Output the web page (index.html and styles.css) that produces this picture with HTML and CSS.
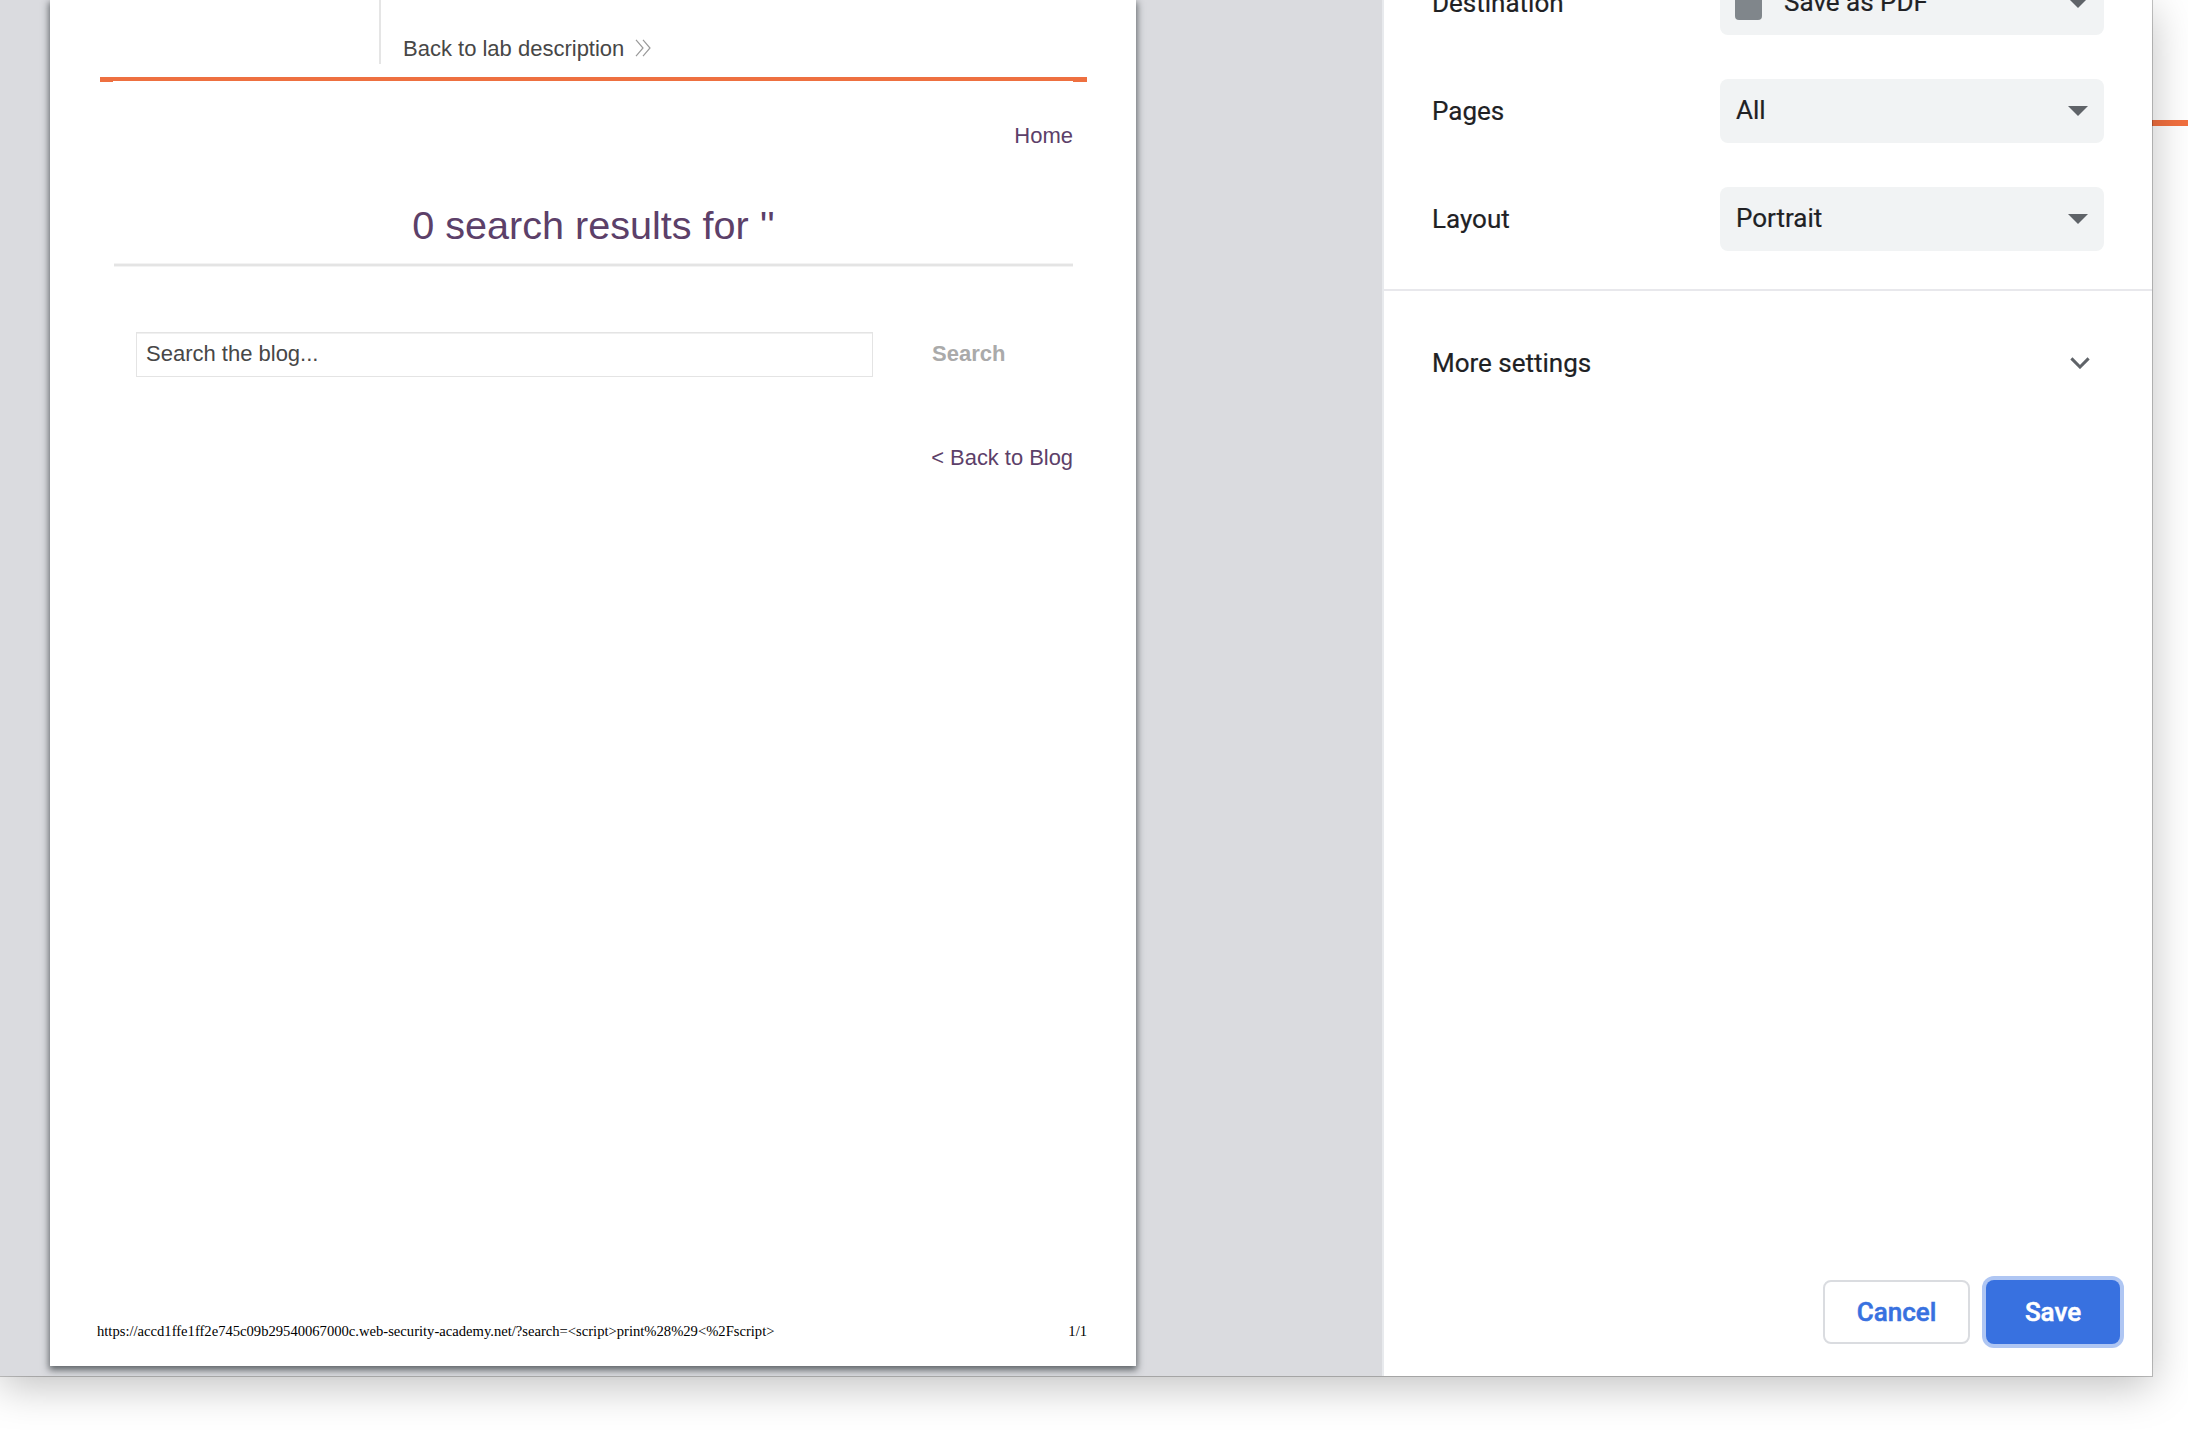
FILE: index.html
```html
<!DOCTYPE html>
<html lang="en">
<head>
<meta charset="utf-8">
<title>Print</title>
<link rel="stylesheet" href="styles.css">
</head>
<body>
<div class="backdrop-rule"></div>
<main class="dialog">
  <section class="preview">
    <article class="sheet">
      <header class="lab-header">
        <div class="lab-link"><span>Back to lab description</span>
          <svg class="lab-arrows" viewBox="0 0 16 18"><path d="M1 .8 8 9 1 17.2M8 .8 15 9 8 17.200" fill="none" stroke="#9a9a9a" stroke-width="1.200"/></svg>
        </div>
      </header>
      <div class="accent"><i></i><b></b><i class="wide"></i></div>
      <div class="content">
        <a class="home">Home</a>
        <h1>0 search results for ''</h1>
        <div class="search">
          <div class="field">Search the blog...</div>
          <span class="search-btn">Search</span>
        </div>
        <a class="back">&lt; Back to Blog</a>
      </div>
      <footer class="sheet-footer"><span class="url">https://accd1ffe1ff2e745c09b29540067000c.web-security-academy.net/?search=&lt;script&gt;print%28%29&lt;%2Fscript&gt;</span><span class="num">1/1</span></footer>
    </article>
  </section>
  <aside class="settings">
    <div class="rows">
      <div class="row"><span class="label">Destination</span><div class="select"><i class="pdf"></i><span class="value">Save as PDF</span><svg class="caret" viewBox="0 0 20 10"><path d="M0 0h20L10 10z"/></svg></div></div>
      <div class="row"><span class="label">Pages</span><div class="select"><span class="value">All</span><svg class="caret" viewBox="0 0 20 10"><path d="M0 0h20L10 10z"/></svg></div></div>
      <div class="row"><span class="label">Layout</span><div class="select"><span class="value">Portrait</span><svg class="caret" viewBox="0 0 20 10"><path d="M0 0h20L10 10z"/></svg></div></div>
    </div>
    <div class="more"><span>More settings</span><svg class="chevron" viewBox="0 0 20 12"><path d="M1.400 1.400 10 10 18.600 1.400" fill="none" stroke="#5f6368" stroke-width="3"/></svg></div>
    <div class="actions"><button class="btn cancel">Cancel</button><button class="btn save">Save</button></div>
  </aside>
</main>
</body>
</html>
```
FILE: styles.css
```css
* { box-sizing: border-box; }
body { margin: 0; width: 2188px; height: 1430px; overflow: hidden; background: #fff; position: relative; }
.backdrop-rule { position: absolute; top: 120px; left: 0; width: 2188px; height: 6px; background: #f2703f; }
.dialog {
  position: relative; display: flex; width: 2152px; height: 1376px;
  background: #fff;
  box-shadow: 0 0 0 1px rgba(0,0,0,.22), 0 10px 40px rgba(0,0,0,.25);
}
.preview { width: 1382px; background: #dadbdf; padding-left: 50px; overflow: hidden; }
.sheet {
  width: 1086px; height: 1366px; background: #fff; display: flex; flex-direction: column;
  font: 22px/24px "Liberation Sans", Arial, sans-serif; color: #474747;
  box-shadow: 0 3px 7px 1px rgba(40,45,50,.7);
}
.lab-header { height: 64px; margin-left: 329px; border-left: 2px solid #e5e5e5; padding: 37px 0 0 22px; }
.lab-link { display: flex; align-items: center; gap: 11px; }
.lab-arrows { width: 16px; height: 18px; margin-top: -3px; }
.accent { display: flex; width: 987px; height: 5px; margin: 13px 0 0 50px; }
.accent i { width: 13px; height: 5px; background: #ee7040; }
.accent b { flex: 1; height: 4px; background: #ee7040; }
.accent .wide { width: 14px; }
.content { margin-left: 64px; width: 959px; height: 1238px; display: flex; flex-direction: column; color: #5c4069; }
.home { align-self: flex-end; margin-top: 42px; }
h1 { margin: 52px 0 0; height: 67px; font-size: 39.600px; line-height: 51px; font-weight: 400; text-align: center; border: solid #f3f3f3; border-width: 0 0 1px; box-shadow: inset 0 -2px #e4e4e4, inset 0 -3px #f3f3f3; }
.search { display: flex; margin: 65px 0 0 22px; align-items: center; }
.field { width: 737px; height: 45px; border: 1px solid #e4e4e4; box-shadow: inset 0 1px #f0f0f0; padding: 9px; color: #474747; }
.search-btn { margin: -2px 0 0 59px; font-weight: 700; color: #aaa; }
.back { align-self: flex-end; margin-top: 69px; font-size: 21.900px; }
.sheet-footer { display: flex; justify-content: space-between; margin: 1px 49px 23px 47px; font: 14.620px/20px "Liberation Serif", "Times New Roman", serif; color: #000; }
.settings { flex: 1; display: flex; flex-direction: column; border-left: 2px solid #e8eaed; font: 26px/32px Roboto, sans-serif; color: #202124; -webkit-text-stroke: .2px; }
.rows { margin-top: -29px; display: flex; flex-direction: column; gap: 44px; padding: 0 48px 38px; border-bottom: 2px solid #e8e8ec; }
.row { display: flex; justify-content: space-between; align-items: center; }
.select { width: 384px; height: 64px; border-radius: 8px; background: #f1f3f4; display: flex; align-items: center; padding: 0 16px; }
.value { flex: 1; padding-bottom: 2px; }
.pdf { width: 27px; height: 34px; margin: 0 22px 0 -1px; background: #80868b; border-radius: 4px; }
.caret { width: 20px; height: 10px; fill: #5f6368; }
.more { display: flex; justify-content: space-between; align-items: center; padding: 0 62px 0 48px; margin-top: 56px; height: 32px; }
.chevron { width: 20px; height: 12px; }
.actions { margin: auto 32px 32px 0; display: flex; justify-content: flex-end; gap: 16px; }
.btn { height: 64px; border-radius: 8px; font: 500 26px/32px Roboto, sans-serif; padding: 0; -webkit-text-stroke: .5px; }
.cancel { width: 147px; border: 2px solid #dadce0; background: #fff; color: #3871e0; }
.save { width: 134px; border: 0; background: #3871e0; color: #fff; box-shadow: 0 0 0 4px #afc6f3; }
```
